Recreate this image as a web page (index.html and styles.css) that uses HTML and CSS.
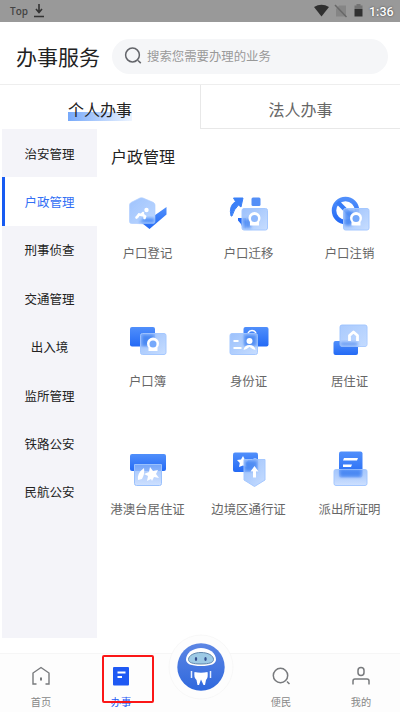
FILE: index.html
```html
<!DOCTYPE html>
<html lang="zh-CN">
<head>
<meta charset="utf-8">
<title>办事服务</title>
<link rel="stylesheet" href="styles.css">
</head>
<body>
<svg width="0" height="0" class="defs">
  <defs>
    <linearGradient id="deep" x1="0" y1="0" x2="0" y2="1"><stop offset="0" stop-color="#508ffb"/><stop offset="1" stop-color="#246af5"/></linearGradient>
    <linearGradient id="glass" x1="0" y1="0" x2="1" y2="1"><stop offset="0" stop-color="#8bb6fb" stop-opacity=".85"/><stop offset="1" stop-color="#c5dcff" stop-opacity=".95"/></linearGradient>
    <linearGradient id="pale" x1="0" y1="0" x2="0" y2="1"><stop offset="0" stop-color="#89b4fa" stop-opacity=".75"/><stop offset="1" stop-color="#cfe1ff"/></linearGradient>
    <filter id="soft" x="-30%" y="-30%" width="160%" height="160%"><feGaussianBlur stdDeviation="1.8"/></filter>
  </defs>
</svg>
<div class="phone">
  <div class="status">
    <span class="top">Top</span>
    <svg class="download" width="10" height="14" viewBox="0 0 10 14"><path d="M5 0v8M2 5l3 3.500L8 5M0 12.500h10" fill="none" stroke="#333" stroke-width="1.600"/></svg>
    <svg class="signals" width="52" height="14" viewBox="0 0 52 14"><path d="M0 3Q7.500 -1.500 15 3L7.500 12.500Z" fill="#303030"/><path d="M22 5l3-3.500h7V12.500H22z" fill="#858585"/><path d="M21 1l11.500 12" stroke="#686868" stroke-width="1.500"/><path d="M42.500 0h4v1.500h2V5h-8V1.500h2z" fill="#747474"/><path d="M40.500 5h8v7.500h-8z" fill="#303030"/></svg>
    <b class="clock">1:36</b>
  </div>
  <header class="header">
    <h1>办事服务</h1>
    <div class="search">
      <svg width="18" height="18" viewBox="0 0 18 18" fill="none" stroke="#63656a" stroke-width="1.500"><circle cx="8.500" cy="8" r="6.900"/><path d="M14 13.500l2.800 2.600"/></svg>
      <span>搜索您需要办理的业务</span>
    </div>
  </header>
  <nav class="tabs">
    <div class="tab tab-on"><span>个人办事</span></div>
    <div class="tab tab-off"><span>法人办事</span></div>
  </nav>
  <main class="content">
    <aside class="side">
      <div>治安管理</div><div class="chosen">户政管理</div><div>刑事侦查</div><div>交通管理</div><div>出入境</div><div>监所管理</div><div>铁路公安</div><div>民航公安</div>
    </aside>
    <section class="services">
      <h2>户政管理</h2>
      <div class="grid">
        <div class="item"><svg viewBox="0 0 48 44"><path d="M14 27l11.500-1 17-12v7.500l-17 14.500z" fill="url(#deep)"/><path d="M16 5Q17.500 4.500 19 5L29.500 9.500Q31 10.500 31 12V28.500Q31 30.500 29 30.500H7.500Q5.500 30.500 5.500 28.500V12Q5.500 10.500 7 9.500Z" fill="#b5d2ff"/><path d="M16 5Q17.500 4.500 19 5L29.500 9.500Q31 10.500 31 12V28.500Q31 30.500 29 30.500H7.500Q5.500 30.500 5.500 28.500V12Q5.500 10.500 7 9.500Z" fill="url(#glass)" opacity=".6" stroke="#a9caff"/><path d="M15 29.500L20 25h10.500v5z" fill="#3f85f8" filter="url(#soft)" opacity=".8"/><path d="M13 24l2-2.500 3 .5 1-2M18 21l3 2.500-.5 1.500M14 23l-1.500 1.500" fill="none" stroke="#fff" stroke-width="2.600" stroke-linecap="round"/><circle cx="22.500" cy="17" r="2.200" fill="#fff"/></svg><span>户口登记</span></div>
        <div class="item"><svg viewBox="0 0 48 44"><path d="M6 23Q3.500 13 10.500 8.500L8.500 5l9.500 0-2 9-2.500-2Q9 16 7 23z" fill="#3b80f7" stroke="#3b80f7" stroke-linejoin="round"/><rect x="26.500" y="4.500" width="9" height="8.500" rx="1.500" fill="#548ff7"/><path d="M13 25h8v10.500h-3q-1.500-5-5-8z" fill="#246af5"/><rect x="17" y="15.500" width="25.500" height="21.500" rx="2" fill="url(#glass)" stroke="#a5c8ff"/><path d="M18 27l8-2v10h-6z" fill="#2771ef" opacity=".6" filter="url(#soft)"/><path d="M25 32.500V29a6 6 0 1 1 9 0v3.500z" fill="#fff"/><circle cx="29.500" cy="25.500" r="3.500" fill="#8eb8fc"/></svg><span>户口迁移</span></div>
        <div class="item"><svg viewBox="0 0 48 44"><circle cx="19.500" cy="17.500" r="11.500" fill="none" stroke="url(#deep)" stroke-width="4.500"/><path d="M11.500 9l17 17" stroke="#377cf7" stroke-width="4.500"/><rect x="17.500" y="15.500" width="25.500" height="21.500" rx="2" fill="url(#glass)" stroke="#a5c8ff"/><path d="M19 18h9l2 8-5 7h-6z" fill="#2771ef" opacity=".6" filter="url(#soft)"/><path d="M25.500 32.500V29a6 6 0 1 1 9 0v3.500z" fill="#fff"/><circle cx="30" cy="25.500" r="3.500" fill="#74a8fb"/></svg><span>户口注销</span></div>
        <div class="item mid"><svg viewBox="0 0 48 44"><rect x="6" y="4" width="25" height="19.500" rx="2" fill="url(#deep)"/><rect x="16.500" y="10.500" width="25.500" height="21" rx="2" fill="url(#glass)" stroke="#a5c8ff"/><path d="M18 12h12v11H18z" fill="#2771ef" opacity=".65" filter="url(#soft)"/><path d="M24.500 28v-3.500a6 6 0 1 1 9 0V28z" fill="#fff"/><circle cx="29" cy="21" r="3.500" fill="#74a8fb"/></svg><span>户口簿</span></div>
        <div class="item mid"><svg viewBox="0 0 48 44"><rect x="18.500" y="4" width="25" height="19.500" rx="2" fill="url(#deep)"/><path d="M23 10a4.500 4.500 0 0 1 8 0" stroke="#fff" stroke-width="1.500" fill="none"/><rect x="5" y="10.500" width="27.500" height="21" rx="2" fill="url(#glass)" stroke="#a5c8ff"/><path d="M19.500 12h12v11h-12z" fill="#2771ef" opacity=".65" filter="url(#soft)"/><circle cx="24.500" cy="18" r="3" fill="#fff"/><path d="M18.500 27q1-5 6-5t6 5l-3-1-3-2-3 2zM8.500 17h5v2h-5zm0 7h8v2h-8z" fill="#fff"/></svg><span>身份证</span></div>
        <div class="item mid"><svg viewBox="0 0 48 44"><rect x="7.500" y="18" width="24.500" height="14" rx="2" fill="url(#deep)"/><rect x="14" y="2" width="27" height="21.500" rx="2" fill="#c2daff" stroke="#a5c8ff"/><rect x="14" y="2" width="27" height="21.500" rx="2" fill="url(#glass)" opacity=".5"/><path d="M14.500 19h17v4h-17z" fill="#3979ee" opacity=".55" filter="url(#soft)"/><path d="M23.500 18v-5.500l4-3.500 4 3.500V18" stroke="#fff" stroke-width="2.800" fill="none" stroke-linejoin="round"/></svg><span>居住证</span></div>
        <div class="item low"><svg viewBox="0 0 48 44"><rect x="6" y="4" width="36" height="17" rx="2" fill="url(#deep)"/><path d="M10.500 14.500h27v19q0 2-2 2h-23q-2 0-2-2z" fill="url(#pale)" stroke="#9ac1fd"/><path d="M14 30q-1-7 6-12 1 6-2 11zM27 29l-4 2 1-5-4-2 5-2 1-5 3 4 5-1-2 4 3 4-5-1-2 4z" fill="#fff"/></svg><span>港澳台居住证</span></div>
        <div class="item low"><svg viewBox="0 0 48 44"><rect x="8" y="2.500" width="25" height="19.500" rx="2" fill="url(#deep)"/><path d="M18 6l1.800 3.500 3.700.5-2.500 3 .5 4-3.500-1.500-4 1.500.8-4-2.800-3 4-.5z" fill="#fff"/><path d="M19 9.500h8.500L30 8.500l2.500 1H40V30L29.500 36.500 19 30z" fill="url(#glass)" stroke="#a5c8ff"/><path d="M20 11h12v10H20z" fill="#2771ef" opacity=".6" filter="url(#soft)"/><path d="M28 27.500v-6h-2.500l4-5.500 4 5.500H31v6z" fill="#fff"/></svg><span>边境区通行证</span></div>
        <div class="item low"><svg viewBox="0 0 48 44"><rect x="13" y="1.500" width="23.500" height="26" rx="2" fill="url(#deep)"/><path d="M18 8h14l-1 2.500H17zm-1 6.500h9l-1 2.500h-8z" fill="#fff"/><path d="M9.500 19.500h30q1.500 0 1.500 2v12q0 2-2 2h-29q-2 0-2-2v-12q0-2 1.500-2z" fill="url(#pale)" stroke="#a5c8ff"/><path d="M14 20h21v7H14z" fill="#2771ef" opacity=".6" filter="url(#soft)"/></svg><span>派出所证明</span></div>
      </div>
    </section>
  </main>
  <footer class="bottom">
    <div class="nav"><svg width="20" height="20" viewBox="0 0 20 20"><path d="M5.500 18H2V7l8-5.500L18 7v11h-3.500" fill="none" stroke="#77797c" stroke-width="1.400"/><path d="M10 11.500v3" stroke="#77797c" stroke-width="2"/></svg><span>首页</span></div>
    <div class="nav active"><svg width="20" height="20" viewBox="0 0 20 20"><rect x="2" y="1" width="16" height="18.500" rx="1" fill="#1f59f3"/><path d="M6.500 6.500h8M6.500 11H11" stroke="#fff" stroke-width="2"/></svg><span>办事</span><i class="marker"></i></div>
    <div class="robot"><svg width="66" height="66" viewBox="0 0 66 66"><defs><linearGradient id="bot" x1="0" y1="0" x2="0" y2="1"><stop stop-color="#5c86e4"/><stop offset="1" stop-color="#2f68dd"/></linearGradient></defs><circle cx="33" cy="33" r="32" fill="#fdfdfd" stroke="#f4f4f4" stroke-width=".6"/><circle cx="33" cy="33" r="23.700" fill="url(#bot)"/><path d="M33 14c8 0 15 5 15 11.500q0 6.500-15 6.500t-15-6.500C18 19 25 14 33 14z" fill="#fff"/><path d="M33 18.500c7 0 12.500 3 12.500 7 0 3-4 4.500-12.500 4.500s-12.500-1.500-12.500-4.500c0-4 5.500-7 12.500-7z" fill="#9dcae5" stroke="#6287ac"/><ellipse cx="28" cy="25" rx="1.200" ry="2" fill="#344f8f"/><ellipse cx="37.500" cy="25" rx="1.200" ry="2" fill="#344f8f"/><path d="M26.500 38q6.500 1.500 13 0 1 5-1.500 8l-1 5h-1.500L33 45.500 31 51h-1.500l-1-5q-3-3-2-8z" fill="#fff"/><path d="M23.500 37v7M42.500 37v7" stroke="#e7efff" stroke-width="1.500"/></svg></div>
    <div class="nav"><svg width="20" height="20" viewBox="0 0 20 20" fill="none" stroke="#77797c" stroke-width="1.500"><circle cx="9.500" cy="9.500" r="7.200"/><path d="M16 15.500l2.500 2.500"/></svg><span>便民</span></div>
    <div class="nav"><svg width="20" height="20" viewBox="0 0 20 20" fill="none" stroke="#77797c" stroke-width="1.500"><rect x="7" y="1.500" width="6" height="8" rx="3"/><path d="M2 18.500V15q0-2 2-2h12q2 0 2 2v3.500"/></svg><span>我的</span></div>
  </footer>
</div>
</body>
</html>
```
FILE: styles.css
```css
* { box-sizing: border-box; }
body { margin: 0; background: #fff; color: #222; font-family: "Noto Sans CJK SC", sans-serif; }
.defs { position: absolute; }
.phone { width: 400px; height: 712px; overflow: hidden; display: flex; flex-direction: column; }
.status { height: 22px; flex: none; background: #999; display: flex; align-items: center; padding: 0 6px 0 10px; }
.top { font: 600 10px "Open Sans", sans-serif; color: #444; width: 24px; }
.signals { margin-left: auto; }
.clock { font: 500 12.5px Roboto, sans-serif; color: #fff; margin-left: 3px; text-shadow: 0 0 2px #333; width: 25px; }
.header { height: 62px; flex: none; display: flex; align-items: center; padding: 9px 12px 3px 16px; }
h1 { margin: 0; font-size: 21px; font-weight: 400; width: 96px; white-space: nowrap; line-height: 30px; }
.search { height: 35px; flex: 1; border-radius: 18px; background: #f5f6f8; display: flex; align-items: center; gap: 5px; padding: 0 12px; color: #999; font-size: 12.4px; }
.tabs { height: 45px; flex: none; display: flex; border-top: 1px solid #eee; }
.tab { width: 50%; display: flex; justify-content: center; align-items: center; font-size: 16px; padding-top: 5px; }
.tab-on span { line-height: 23px; background: linear-gradient(90deg, #77a9fa, #eef5ff) 0 100% / 100% 9px no-repeat; }
.tab-off { border-left: 1px solid #e8e8e8; border-bottom: 1px solid #e8e8e8; color: #666; }
.content { height: 524px; flex: none; display: flex; align-items: flex-start; padding-left: 2px; }
.side { width: 95px; height: 509px; background: #f4f4f9; font-size: 12.5px; }
.side div { height: 48.4px; display: flex; align-items: center; justify-content: center; }
.side .chosen { background: #fff; color: #3370f5; border-left: 3px solid #175bf2; padding-right: 3px; }
.services { flex: 1; }
h2 { margin: 15px 0 0 14px; font-size: 16px; line-height: 25px; font-weight: 400; }
.grid { display: grid; grid-template-columns: repeat(3, 101px); grid-auto-rows: 128px; padding-top: 24px; }
.item { display: flex; flex-direction: column; align-items: center; font-size: 12.4px; color: #666; }
.item svg { width: 48px; height: 44px; }
.item span { line-height: 18px; margin-top: 7px; white-space: nowrap; }
.mid { padding-top: 2px; }
.mid span { margin-top: 5px; }
.low { padding-top: 1px; }
.low span { margin-top: 6px; }
.bottom { flex: 1; display: grid; grid-template-columns: repeat(5, 80px); background: #fdfdfd; border-top: 1px solid #f6f6f6; position: relative; }
.nav { display: flex; flex-direction: column; align-items: center; padding: 12px 0 0 2px; color: #888; font-size: 10.2px; position: relative; }
.nav span { line-height: 16px; margin-top: 8px; }
.active { color: #1f59f3; }
.marker { position: absolute; left: 22px; top: 1px; width: 52px; height: 48px; border: 2px solid #fb1717; border-radius: 2px; }
.robot { margin: -20px 0 0 8px; height: 66px; position: relative; }
```
